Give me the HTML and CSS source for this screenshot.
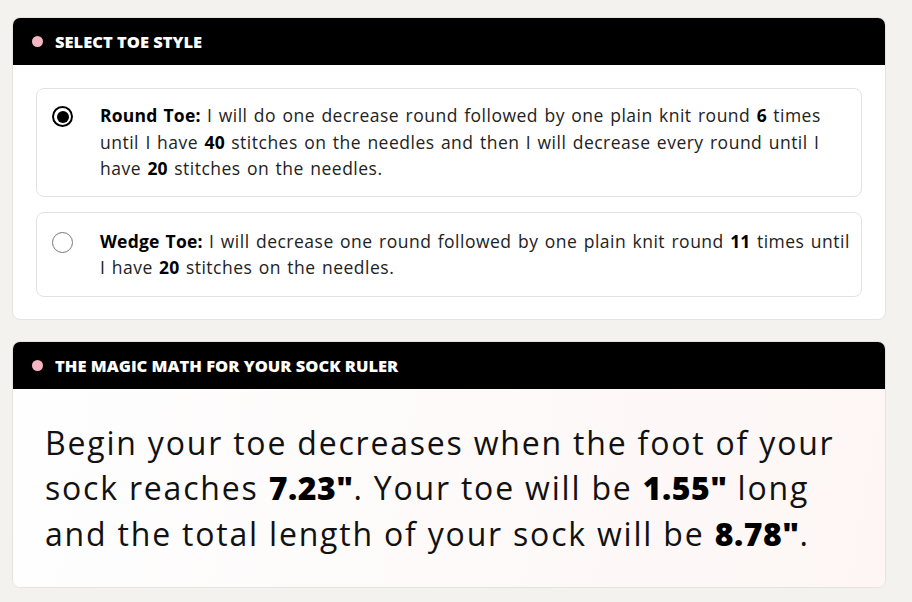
FILE: index.html
```html
<!DOCTYPE html>
<html>
<head>
<meta charset="utf-8">
<link rel="stylesheet" href="styles.css">
</head>
<body>
<div class="page">
  <section class="card">
    <div class="card-head"><span class="dot"></span><span class="title">SELECT TOE STYLE</span></div>
    <div class="card-body options">
      <label class="option">
        <span class="radio checked"></span>
        <span class="opt-text"><b>Round Toe:</b> I will do one decrease round followed by one plain knit round <b>6</b> times<br>until I have <b>40</b> stitches on the needles and then I will decrease every round until I<br>have <b>20</b> stitches on the needles.</span>
      </label>
      <label class="option option-short">
        <span class="radio"></span>
        <span class="opt-text"><b>Wedge Toe:</b> I will decrease one round followed by one plain knit round <b>11</b> times until<br>I have <b>20</b> stitches on the needles.</span>
      </label>
    </div>
  </section>
  <section class="card">
    <div class="card-head"><span class="dot"></span><span class="title">THE MAGIC MATH FOR YOUR SOCK RULER</span></div>
    <div class="card-body result">
      <p class="big">Begin your toe decreases when the foot of your<br>sock reaches <b>7.23"</b>. Your toe will be <b>1.55"</b> long<br>and the total length of your sock will be <b>8.78"</b>.</p>
    </div>
  </section>
</div>
</body>
</html>
```

FILE: styles.css
```css
html, body {
  margin: 0;
  padding: 0;
  background: #f4f2ef;
}
body {
  font-family: "Open Sans", "Noto Sans", sans-serif;
  color: #111;
}
.page {
  width: 874px;
  padding: 17px 0 0 12px;
  display: flex;
  flex-direction: column;
  gap: 21px;
}
.card {
  border-radius: 8px;
  background: #fff;
  border: 1px solid #e6e3df;
  overflow: hidden;
}
.card-head {
  background: #000;
  height: 47px;
  display: flex;
  align-items: center;
  padding-left: 19px;
  gap: 12px;
}
.dot {
  width: 11px;
  height: 11px;
  border-radius: 50%;
  background: #f4b6c2;
}
.title {
  color: #fff;
  font-family: "Open Sans", sans-serif;
  font-weight: 800;
  font-size: 16.5px;
  letter-spacing: 0;
}
.options {
  padding: 23px 23px 22px 23px;
  display: flex;
  flex-direction: column;
  gap: 15px;
}
.option {
  display: flex;
  align-items: flex-start;
  border: 1px solid #e4e2df;
  border-radius: 8px;
  padding: 13px 8px 14px 15px;
  gap: 27px;
}
.option-short {
  padding-top: 15px;
  padding-bottom: 15px;
}
.radio {
  flex: none;
  width: 21px;
  height: 21px;
  border: 1.5px solid #777;
  border-radius: 50%;
  margin-top: 4px;
  box-sizing: border-box;
  position: relative;
}
.radio.checked {
  border: 2px solid #000;
}
.radio.checked::after {
  content: "";
  position: absolute;
  left: 2.5px;
  top: 2.5px;
  width: 12px;
  height: 12px;
  border-radius: 50%;
  background: #000;
}
.opt-text {
  font-size: 17.5px;
  line-height: 26.5px;
  letter-spacing: 0.5px;
  word-spacing: 1.3px;
  color: #222;
}
.opt-text b {
  font-weight: 700;
  color: #000;
  letter-spacing: 0.2px;
}
.result {
  background: linear-gradient(100deg, #fefefe 0%, #fdf6f5 100%);
  padding: 31px 20px 31px 32px;
}
.big {
  margin: 0;
  font-size: 32px;
  line-height: 45.5px;
  letter-spacing: 1.8px;
  color: #111;
}
.big b {
  font-weight: 800;
  color: #000;
  letter-spacing: 0.5px;
}
```
